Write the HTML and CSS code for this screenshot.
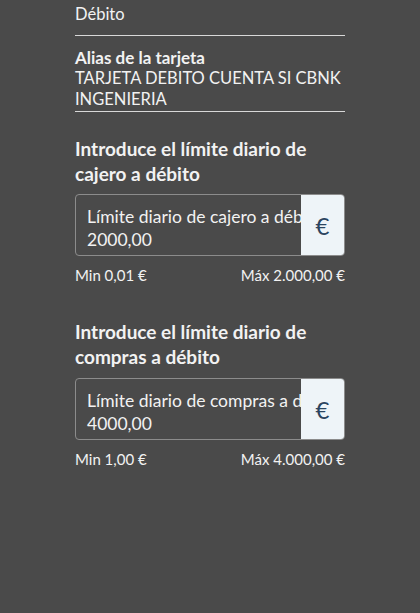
FILE: index.html
```html
<!DOCTYPE html>
<html>
  <head>
    <meta charset="UTF-8">
    <title>Límites de tarjeta</title>
    <link rel="stylesheet" href="styles.css">
  </head>
  <body>
    <div id='content'>
      <div class='field field-plain'>
        <div class='field-value'>Débito</div>
      </div>

      <div class='field'>
        <div class='field-label'>Alias de la tarjeta</div>
        <div class='field-value'>TARJETA DEBITO CUENTA SI CBNK INGENIERIA</div>
      </div>

      <div class='limit'>
        <h2 class='limit-title'>Introduce el límite diario de cajero a débito</h2>
        <div class='amount-input'>
          <div class='amount-body'>
            <div class='amount-label'>Límite diario de cajero a débito</div>
            <div class='amount-value'>2000,00</div>
          </div>
          <div class='amount-currency'>€</div>
        </div>
        <div class='limit-range'>
          <span>Min 0,01 €</span>
          <span>Máx 2.000,00 €</span>
        </div>
      </div>

      <div class='limit'>
        <h2 class='limit-title'>Introduce el límite diario de compras a débito</h2>
        <div class='amount-input'>
          <div class='amount-body'>
            <div class='amount-label'>Límite diario de compras a débito</div>
            <div class='amount-value'>4000,00</div>
          </div>
          <div class='amount-currency'>€</div>
        </div>
        <div class='limit-range'>
          <span>Min 1,00 €</span>
          <span>Máx 4.000,00 €</span>
        </div>
      </div>
    </div>
  </body>
</html>
```

FILE: styles.css
```css
html, body {
  margin: 0;
  padding: 0;
  height: 100%;
  width: 100%;
}

body {
  background: #4a4a4a;
  color: #f2f2f2;
  font-family: Lato, "Noto Sans", sans-serif;
}

#content {
  padding: 4px 75px 0 75px;
}

.field {
  border-bottom: 1px solid #d8d8d8;
  margin-bottom: 11px;
}

.field-plain .field-value {
  padding-bottom: 10px;
}

.field-label {
  font-size: 17px;
  font-weight: 700;
  line-height: 21px;
}

.field-value {
  font-size: 16.5px;
  line-height: 21px;
  padding-bottom: 1px;
}

.limit {
  margin-top: 24px;
  margin-bottom: 34px;
}

.limit-title {
  margin: 0 0 8px 0;
  font-size: 19px;
  font-weight: 700;
  line-height: 25px;
}

.limit + .limit .limit-title {
  margin-bottom: 9px;
}

.amount-input {
  display: flex;
  height: 60px;
  border: 1px solid #8c8c8c;
  border-radius: 4px;
  overflow: hidden;
}

.amount-body {
  flex: 1;
  min-width: 0;
  padding: 10px 0 0 11px;
  font-size: 17.5px;
  line-height: 23px;
  white-space: nowrap;
  overflow: hidden;
}

.amount-currency {
  width: 43px;
  display: flex;
  align-items: center;
  justify-content: center;
  background: #eef4f8;
  color: #2b4560;
  font-size: 24px;
}

.limit-range {
  display: flex;
  justify-content: space-between;
  margin-top: 10px;
  font-size: 15px;
  line-height: 19px;
}
```
